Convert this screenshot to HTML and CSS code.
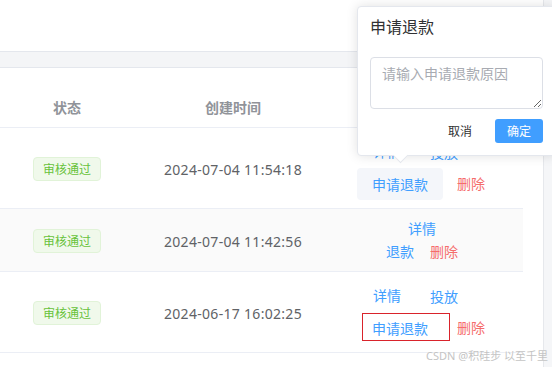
FILE: index.html
```html
<!DOCTYPE html>
<html lang="zh">
<head>
<meta charset="utf-8">
<title>申请退款</title>
<link rel="stylesheet" href="styles.css">
</head>
<body>
<div class="page">
  <main class="main">
    <div class="top"></div>
    <div class="band"></div>
    <div class="table">
      <div class="row head">
        <div class="cell">状态</div>
        <div class="cell">创建时间</div>
        <div class="cell">操作</div>
        <div class="cell"></div>
      </div>
      <div class="row tall">
        <div class="cell"><span class="tag">审核通过</span></div>
        <div class="cell date">2024-07-04 11:54:18</div>
        <div class="cell actions">
          <div class="line big"><span class="link primary">详情</span><span class="tbtn primary">投放</span></div>
          <div class="line big"><span class="tbtn primary hover">申请退款</span><span class="link danger">删除</span></div>
        </div>
        <div class="cell"></div>
      </div>
      <div class="row short stripe">
        <div class="cell"><span class="tag">审核通过</span></div>
        <div class="cell date">2024-07-04 11:42:56</div>
        <div class="cell actions">
          <div class="line small"><span class="link primary">详情</span></div>
          <div class="line small"><span class="link primary">退款</span><span class="link danger">删除</span></div>
        </div>
        <div class="cell"></div>
      </div>
      <div class="row tall">
        <div class="cell"><span class="tag">审核通过</span></div>
        <div class="cell date">2024-06-17 16:02:25</div>
        <div class="cell actions">
          <div class="line big"><span class="link primary">详情</span><span class="tbtn primary">投放</span></div>
          <div class="line big"><span class="tbtn primary marked">申请退款<span class="mark"></span></span><span class="link danger">删除</span></div>
        </div>
        <div class="cell"></div>
      </div>
    </div>
  </main>
  <aside class="strip"></aside>
</div>

<div class="popover">
  <div class="pop-title">申请退款</div>
  <textarea class="pop-input" placeholder="请输入申请退款原因"></textarea>
  <div class="pop-foot">
    <span class="pbtn cancel">取消</span>
    <span class="pbtn ok">确定</span>
  </div>
  <span class="arrow"></span>
</div>

<div class="watermark">CSDN @积硅步 以至千里</div>
</body>
</html>
```

FILE: styles.css
```css
html, body {
  margin: 0;
  padding: 0;
  width: 552px;
  height: 367px;
  overflow: hidden;
  background: #fff;
  font-family: "Noto Sans", "Noto Sans CJK SC", sans-serif;
  font-size: 14px;
  color: #606266;
}

.page {
  display: flex;
  height: 367px;
}

.main {
  width: 543px;
  flex: none;
}

.strip {
  flex: 1;
  background: #f5f6f8;
  border-left: 1px solid #e6e8ec;
}

.top {
  height: 51px;
  border-bottom: 1px solid #e4e7ed;
}

.band {
  height: 15px;
  background: #f4f5f7;
  border-bottom: 1px solid #e4e7ed;
}

.table {
  width: 523px;
  padding-top: 20px;
}

.row {
  display: grid;
  grid-template-columns: 134px 198px 180px 11px;
  border-bottom: 1px solid #ebeef5;
}

.row.stripe {
  background: #fafafa;
}

.cell {
  display: flex;
  flex-direction: column;
  align-items: center;
  justify-content: center;
  padding: 8px 0;
}

.head .cell {
  height: 23px;
  line-height: 23px;
  font-weight: bold;
  color: #909399;
}

.tag {
  display: inline-flex;
  align-items: center;
  height: 22px;
  padding: 0 9px;
  font-size: 12px;
  color: #67c23a;
  background: #f0f9eb;
  border: 1px solid #e1f3d8;
  border-radius: 4px;
  margin-top: 2px;
}

.date {
  letter-spacing: 0.3px;
  padding-top: 10px;
}

.line {
  display: flex;
  justify-content: center;
  align-items: center;
  gap: 12px;
}

.line.big {
  height: 32px;
}

.line.small {
  height: 23px;
}

.link {
  padding: 0 2px;
  line-height: 18px;
}

.tbtn {
  position: relative;
  display: inline-flex;
  align-items: center;
  height: 32px;
  padding: 0 15px;
  border-radius: 4px;
}

.primary {
  color: #409eff;
}

.danger {
  color: #f56c6c;
}

.tbtn.hover {
  background: #f4f6fa;
}

.mark {
  position: absolute;
  left: 5px;
  top: 1px;
  width: 86px;
  height: 26px;
  border: 1px solid #d9232b;
}

.popover {
  position: absolute;
  left: 357px;
  top: 6px;
  width: 173px;
  padding: 12px;
  background: #fff;
  border: 1px solid #e4e7ed;
  border-radius: 4px;
  box-shadow: 0 0 12px rgba(0, 0, 0, 0.12);
}

.pop-title {
  font-size: 16px;
  line-height: 16px;
  color: #303133;
  margin-bottom: 22px;
}

.pop-input {
  display: block;
  box-sizing: border-box;
  width: 173px;
  height: 52px;
  margin: 0;
  padding: 5px 11px;
  font-family: inherit;
  font-size: 14px;
  line-height: 21px;
  color: #606266;
  border: 1px solid #dcdfe6;
  border-radius: 4px;
  outline: none;
}

.pop-input::placeholder {
  color: #a8abb2;
}

.pop-foot {
  display: flex;
  justify-content: flex-end;
  gap: 12px;
  margin-top: 10px;
}

.pbtn {
  display: inline-flex;
  align-items: center;
  height: 24px;
  padding: 0 11px;
  font-size: 12px;
  border-radius: 3px;
}

.pbtn.cancel {
  color: #303133;
}

.pbtn.ok {
  color: #fff;
  background: #409eff;
  padding: 0 12px;
}

.arrow {
  position: absolute;
  left: 37px;
  bottom: -6px;
  width: 10px;
  height: 10px;
  background: #fff;
  border-right: 1px solid #e4e7ed;
  border-bottom: 1px solid #e4e7ed;
  transform: rotate(45deg);
}

.watermark {
  position: absolute;
  right: 4px;
  top: 348px;
  font-size: 11px;
  line-height: 16px;
  color: #c4c4c4;
  white-space: nowrap;
  text-shadow: 0 0 1px rgba(255, 255, 255, 0.8);
}
```
